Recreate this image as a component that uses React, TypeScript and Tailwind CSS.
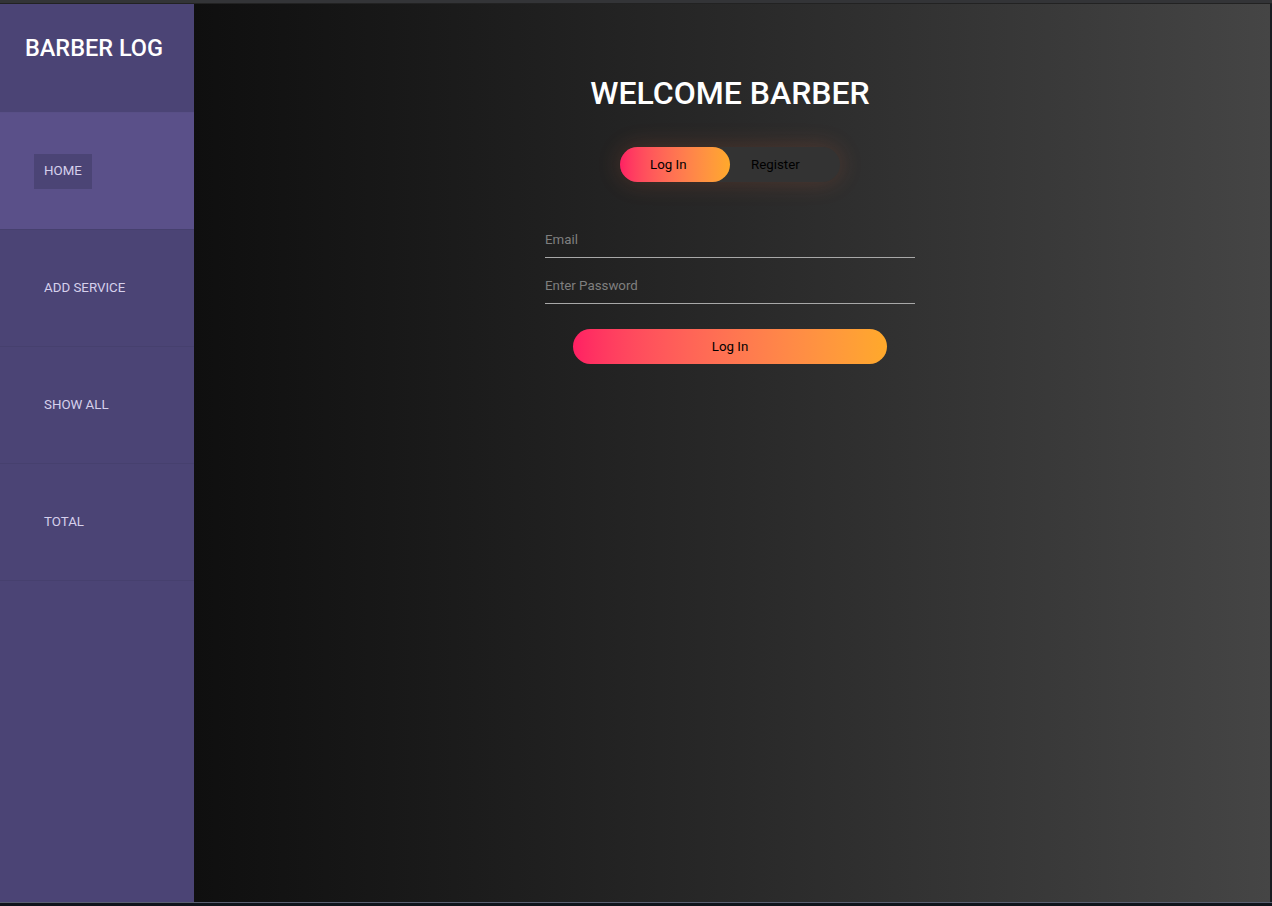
import React from "react";

export default function App() {
  const nav = ["HOME", "ADD SERVICE", "SHOW ALL", "TOTAL"];
  return (
    <div
      className="w-[1272px] h-[906px] flex flex-col bg-[#121820] overflow-hidden"
      style={{ fontFamily: "Roboto, 'Liberation Sans', sans-serif" }}
    >
      <div className="h-[4px] bg-[#333437] border-b border-[#222]" />
      <div className="flex flex-1 min-h-0 pr-[2px] bg-[#1a1d22]">
        <aside className="w-[194px] bg-[#4b4475] flex flex-col">
          <div className="h-[109px] flex items-center justify-center pr-[6px] border-b border-[#584f86]">
            <h1 className="text-white text-[23.5px] font-medium -mt-[18px]">BARBER LOG</h1>
          </div>
          {nav.map((n, i) => (
            <div
              key={n}
              className={
                "h-[117px] flex items-center pl-[34px] border-b border-[#46406e] " +
                (i === 0 ? "bg-[#5a5089]" : "")
              }
            >
              <span
                className={
                  "text-[13.3px] text-[#d6d0ec] h-[35px] flex items-center px-[10px] " +
                  (i === 0 ? "bg-[#4b4475]" : "")
                }
              >
                {n}
              </span>
            </div>
          ))}
        </aside>
        <main className="flex-1 bg-gradient-to-r from-[#0f0f0f] to-[#454545] flex flex-col items-center pt-[69px] pr-[4px]">
          <h2 className="text-white text-[32px] font-medium leading-[40px]">WELCOME BARBER</h2>
          <div className="relative mt-[34px] flex w-[220px] h-[35px] rounded-full bg-[#333333] shadow-[0_0_24px_rgba(255,110,60,0.18)]">
            <div className="absolute left-0 top-0 w-[110px] h-full rounded-full bg-gradient-to-r from-[#ff1f63] to-[#ffa92a]" />
            <button className="relative w-[110px] h-full text-left pl-[30px] text-black text-[13.3px]">
              Log In
            </button>
            <button className="relative w-[110px] h-full text-left pl-[21px] text-black text-[13.3px]">Register</button>
          </div>
          <div className="mt-[40px] w-[370px] flex flex-col">
            <div className="h-[36px] border-b border-[#a8a8a8] flex items-start pt-[9px]">
              <span className="text-[#7f7f7f] text-[13.3px] leading-[18px]">Email</span>
            </div>
            <div className="h-[46px] border-b border-[#a8a8a8] flex items-start pt-[19px]">
              <span className="text-[#7f7f7f] text-[13.3px] leading-[18px]">Enter Password</span>
            </div>
            <button className="mt-[25px] mx-auto w-[314px] h-[35px] rounded-full bg-gradient-to-r from-[#ff1f63] to-[#ffa92a] text-black text-[13.3px]">
              Log In
            </button>
          </div>
        </main>
      </div>
      <div className="h-[4px] bg-[#0f141b] border-t border-[#5a5f70]" />
    </div>
  );
}
